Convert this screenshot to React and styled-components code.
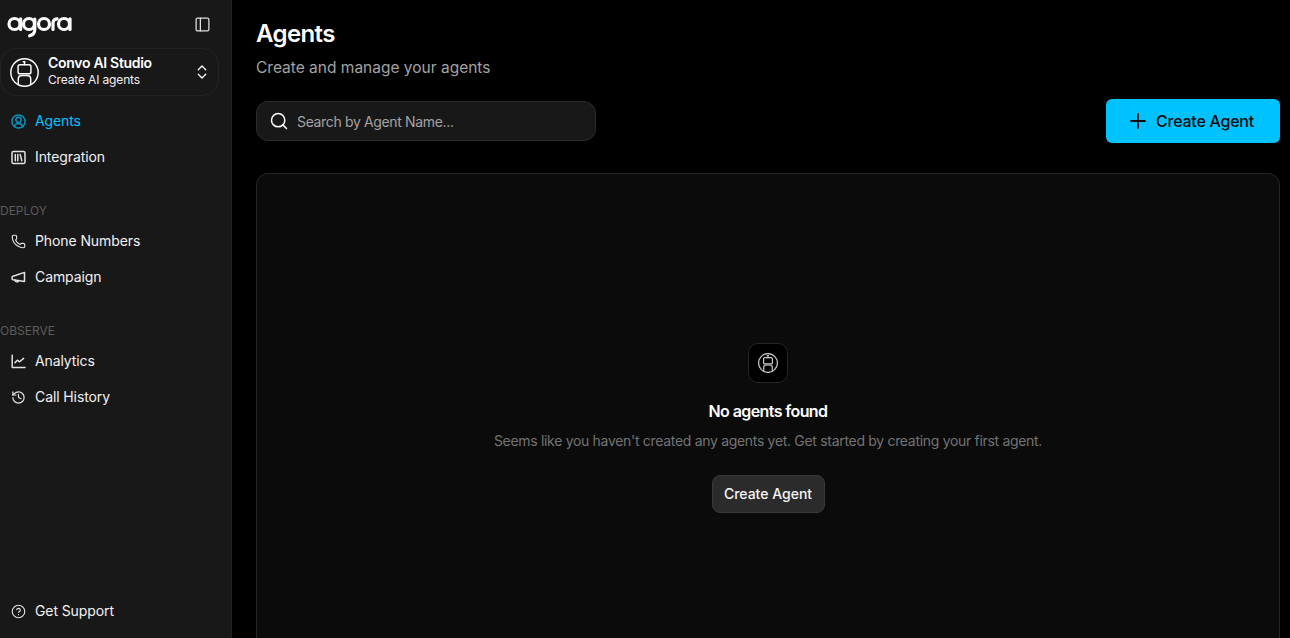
import React from 'react';
import styled, { createGlobalStyle } from 'styled-components';
import { ChevronsUpDown, PanelLeft, Search, Plus, Phone, History, CircleHelp } from 'lucide-react';

const GlobalStyle = createGlobalStyle`
  html, body { margin: 0; padding: 0; background: #000; height: 100%; overflow: hidden; }
  * { box-sizing: border-box; }
  body { font-family: Inter, "Liberation Sans", sans-serif; color: #fff; }
`;

function AgoraLogo() {
    return (
        <svg width="66" height="28" viewBox="0 0 66 28" fill="none" stroke="#fff" strokeWidth="3.2" strokeLinecap="round">
            <circle cx="8.5" cy="12" r="5.5" />
            <path d="M14.6 6.8V17.4" />
            <circle cx="23" cy="12" r="5.5" />
            <path d="M28.8 7V17.4c0 3.8-2.4 5.6-5.2 6.4" />
            <circle cx="38" cy="12" r="5.5" />
            <path d="M47 17.4V11.5c0-2.7 1.6-4.4 4-4.6" />
            <circle cx="58" cy="12" r="5.5" />
            <path d="M64 6.8V17.4" />
        </svg>
    );
}

function RobotIcon({ size = 29, stroke = 1.4 }) {
    return (
        <svg width={size} height={size} viewBox="0 0 28 28" fill="none" stroke="currentColor" strokeWidth={stroke} strokeLinecap="round" strokeLinejoin="round">
            <circle cx="14" cy="14" r="13.2" />
            <path d="M14 6.5V3.8" />
            <path d="M12.8 3.6h1.6" />
            <rect x="7.8" y="6.5" width="12.4" height="8.8" rx="1.8" />
            <path d="M8 25V20.2c0-2 1.5-3.4 3.5-3.4h5c2 0 3.5 1.4 3.5 3.4V25" />
        </svg>
    );
}

function UserRoundIcon() {
    return (
        <svg width="15" height="15" viewBox="0 0 15 15" fill="none" stroke="currentColor" strokeWidth="1.5" strokeLinecap="round">
            <circle cx="7.5" cy="7.5" r="6.6" />
            <circle cx="7.5" cy="5.8" r="2.6" />
            <path d="M3.6 12.4c.4-2 1.6-3 3.9-3s3.5 1 3.9 3" />
        </svg>
    );
}

function IntegrationIcon() {
    return (
        <svg width="15" height="15" viewBox="0 0 15 15" fill="none" stroke="currentColor" strokeWidth="1.5" strokeLinecap="round">
            <rect x="1" y="1.5" width="13" height="12" rx="1.6" />
            <path d="M4.3 4.4V10.8M6.8 4.4V10.8M9.2 4.4L10.8 10.8" />
        </svg>
    );
}

function MegaphoneIcon() {
    return (
        <svg width="15" height="15" viewBox="0 0 15 15" fill="none" stroke="currentColor" strokeWidth="1.5" strokeLinecap="round" strokeLinejoin="round">
            <path d="M13.5 2.4L2 6.2Q1 6.6 1 7.5V8.6Q1 9.5 2 9.7L13.5 11.5Z" />
            <path d="M4 10C4 12.4 7.5 12.4 7.5 10.6" />
        </svg>
    );
}

function AnalyticsIcon() {
    return (
        <svg width="15" height="15" viewBox="0 0 15 15" fill="none" stroke="currentColor" strokeWidth="1.5" strokeLinecap="round" strokeLinejoin="round">
            <path d="M1.2 1.2V13.6H14" />
            <path d="M4 8.6L6.4 6.2L8.6 7.8L12.6 4.4" />
        </svg>
    );
}

export default function App() {
    return (
        <>
            <GlobalStyle />
            <Layout>
                <Sidebar>
                    <LogoRow>
                        <AgoraLogo />
                        <ToggleButton><PanelLeft size={17} strokeWidth={1.8} /></ToggleButton>
                    </LogoRow>
                    <Switcher>
                        <RobotIcon />
                        <SwitcherText>
                            <SwitcherTitle>Convo AI Studio</SwitcherTitle>
                            <SwitcherSub>Create AI agents</SwitcherSub>
                        </SwitcherText>
                        <ChevronsUpDown size={18} strokeWidth={1.7} />
                    </Switcher>
                    <NavGroup>
                        <NavItem $active>
                            <NavIcon $active><UserRoundIcon /></NavIcon>Agents
                        </NavItem>
                        <NavItem>
                            <NavIcon><IntegrationIcon /></NavIcon>Integration
                        </NavItem>
                    </NavGroup>
                    <SectionLabel>DEPLOY</SectionLabel>
                    <NavGroup>
                        <NavItem>
                            <NavIcon><Phone size={15} strokeWidth={1.8} /></NavIcon>Phone Numbers
                        </NavItem>
                        <NavItem>
                            <NavIcon><MegaphoneIcon /></NavIcon>Campaign
                        </NavItem>
                    </NavGroup>
                    <SectionLabel>OBSERVE</SectionLabel>
                    <NavGroup>
                        <NavItem>
                            <NavIcon><AnalyticsIcon /></NavIcon>Analytics
                        </NavItem>
                        <NavItem>
                            <NavIcon><History size={15} strokeWidth={1.9} /></NavIcon>Call History
                        </NavItem>
                    </NavGroup>
                    <SidebarFooter>
                        <NavItem>
                            <NavIcon><CircleHelp size={15} strokeWidth={1.8} /></NavIcon>Get Support
                        </NavItem>
                    </SidebarFooter>
                </Sidebar>
                <Main>
                    <Title>Agents</Title>
                    <Subtitle>Create and manage your agents</Subtitle>
                    <Toolbar>
                        <SearchBox>
                            <Search size={20} strokeWidth={1.8} color="#fff" />
                            <SearchInput placeholder="Search by Agent Name..." />
                        </SearchBox>
                        <PrimaryButton><Plus size={24} strokeWidth={1.8} />Create Agent</PrimaryButton>
                    </Toolbar>
                    <EmptyPanel>
                        <EmptyIcon><RobotIcon size={20} stroke={1.7} /></EmptyIcon>
                        <EmptyTitle>No agents found</EmptyTitle>
                        <EmptyText>Seems like you haven't created any agents yet. Get started by creating your first agent.</EmptyText>
                        <SecondaryButton>Create Agent</SecondaryButton>
                    </EmptyPanel>
                </Main>
            </Layout>
        </>
    );
}

const Layout = styled.div`
  display: flex;
  height: 100vh;
  overflow: hidden;
`;

const Sidebar = styled.aside`
  width: 232px;
  flex-shrink: 0;
  display: flex;
  flex-direction: column;
  background: #181818;
  border-right: 1px solid #222;
`;

const LogoRow = styled.div`
  height: 48px;
  display: flex;
  align-items: flex-start;
  justify-content: space-between;
  padding: 12px 20px 0 6px;
`;

const ToggleButton = styled.div`
  display: flex;
  margin-top: 4px;
  color: #ddd;
`;

const Switcher = styled.div`
  width: 219px;
  height: 48px;
  display: flex;
  align-items: center;
  padding: 0 7px 0 9px;
  border: 1px solid #242424;
  border-radius: 16px;
  margin-bottom: 7px;
  color: #fff;
`;

const SwitcherText = styled.div`
  flex: 1;
  margin: 0 0 4px 9px;
  display: flex;
  flex-direction: column;
  gap: 1px;
`;

const SwitcherTitle = styled.div`
  font-size: 14px;
  line-height: 17px;
  font-weight: 600;
  letter-spacing: -0.3px;
`;

const SwitcherSub = styled.div`
  font-size: 12px;
  line-height: 15px;
  letter-spacing: -0.15px;
  color: #f0f0f0;
`;

const NavGroup = styled.nav`
  display: flex;
  flex-direction: column;
`;

const NavItem = styled.div`
  height: 36px;
  display: flex;
  align-items: center;
  gap: 9px;
  padding: 0 0 2px 11px;
  font-size: 14px;
  letter-spacing: -0.1px;
  color: ${p => (p.$active ? '#00c2ff' : '#f2f2f2')};
`;

const NavIcon = styled.span`
  display: flex;
  width: 15px;
  margin-top: 2px;
  color: ${p => (p.$active ? '#0892bd' : '#e4e4e4')};
`;

const SectionLabel = styled.div`
  margin-top: 27px;
  height: 18px;
  line-height: 18px;
  margin-bottom: 3px;
  font-size: 12px;
  color: #5c5c5c;
`;

const SidebarFooter = styled.div`
  margin-top: auto;
  padding-bottom: 9px;
`;

const Main = styled.main`
  flex: 1;
  min-width: 0;
  padding: 18px 10px 0 24px;
`;

const Title = styled.h1`
  margin: 0;
  font-size: 24px;
  line-height: 32px;
  font-weight: 600;
  letter-spacing: -0.6px;
`;

const Subtitle = styled.p`
  margin: 5px 0 0;
  font-size: 15.5px;
  line-height: 26px;
  color: #a3a3a3;
`;

const Toolbar = styled.div`
  display: flex;
  align-items: center;
  justify-content: space-between;
  margin-top: 18px;
`;

const SearchBox = styled.label`
  width: 340px;
  height: 40px;
  display: flex;
  align-items: center;
  gap: 8px;
  padding: 0 12px;
  background: #181818;
  border: 1px solid #2b2b2b;
  border-radius: 12px;
`;

const SearchInput = styled.input`
  flex: 1;
  min-width: 0;
  background: none;
  border: none;
  outline: none;
  padding: 0;
  font: 400 14px Inter, "Liberation Sans", sans-serif;
  letter-spacing: -0.35px;
  color: #fff;
  &::placeholder { color: #a3a3a3; opacity: 1; }
`;

const PrimaryButton = styled.button`
  width: 174px;
  height: 44px;
  display: flex;
  align-items: center;
  justify-content: center;
  gap: 6px;
  padding: 0 6px 0 0;
  border: none;
  border-radius: 6px;
  background: #00c2ff;
  color: #0a0a0a;
  font: 500 16px Inter, "Liberation Sans", sans-serif;
  letter-spacing: -0.25px;
`;

const EmptyPanel = styled.section`
  height: 510px;
  margin-top: 30px;
  display: flex;
  flex-direction: column;
  align-items: center;
  justify-content: center;
  background: #0b0b0b;
  border: 1px solid #262626;
  border-radius: 12px;
`;

const EmptyIcon = styled.div`
  width: 40px;
  height: 40px;
  display: flex;
  align-items: center;
  justify-content: center;
  background: #000;
  border: 1px solid #262626;
  border-radius: 10px;
  color: #c9c9c9;
`;

const EmptyTitle = styled.h2`
  margin: 18px 0 0;
  font-size: 16px;
  line-height: 20px;
  font-weight: 600;
  letter-spacing: -0.6px;
`;

const EmptyText = styled.p`
  margin: 10px 0 0;
  font-size: 14px;
  line-height: 20px;
  letter-spacing: -0.31px;
  color: #737373;
`;

const SecondaryButton = styled.button`
  width: 113px;
  height: 38px;
  margin-top: 24px;
  padding: 0 0 2px;
  background: #2b2b2b;
  border: 1px solid #383838;
  border-radius: 8px;
  color: #f5f5f5;
  font: 500 14px Inter, "Liberation Sans", sans-serif;
`;
